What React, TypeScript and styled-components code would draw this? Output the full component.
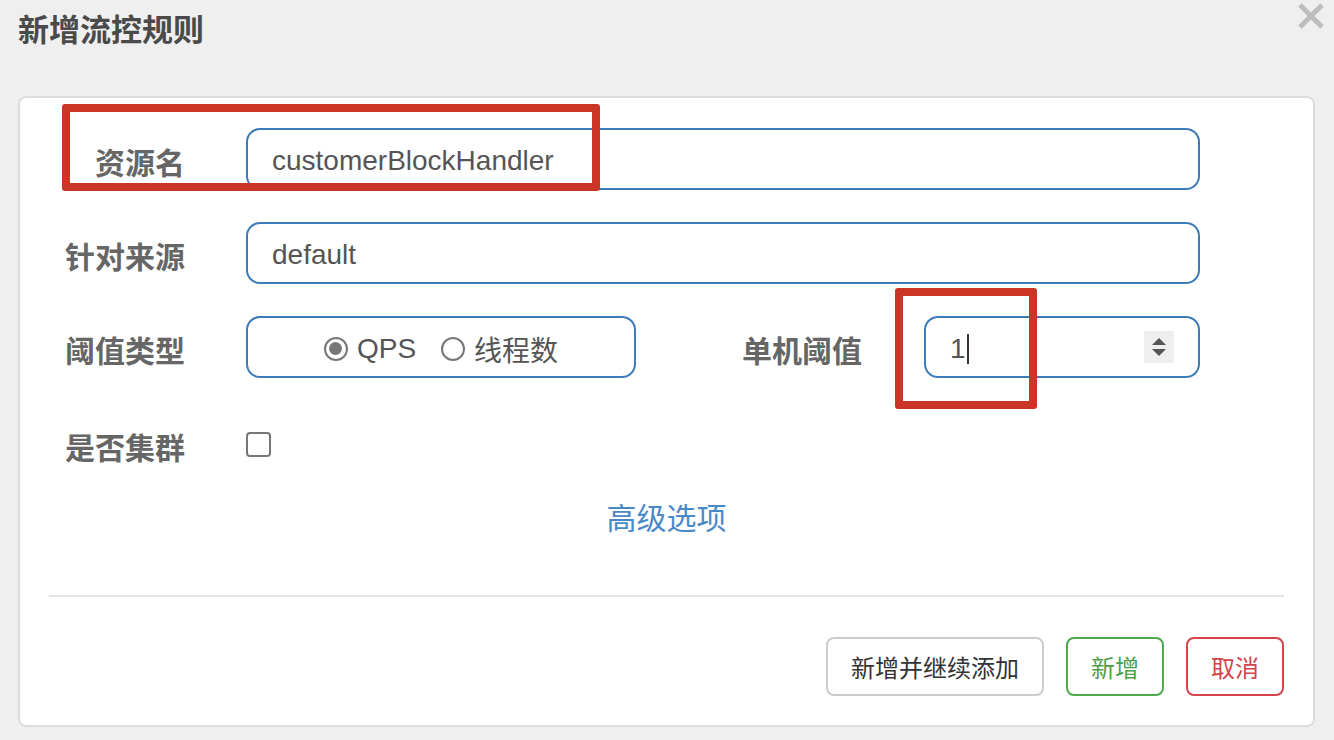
import React from "react";
import styled, { createGlobalStyle } from "styled-components";

const GlobalStyle = createGlobalStyle`
  html, body {
    margin: 0;
    padding: 0;
    background: #efefef;
  }
  body {
    font-family: "Liberation Sans", "Noto Sans CJK SC", sans-serif;
  }
`;

const CJK = `"Liberation Sans", "Noto Sans CJK SC", sans-serif`;

const Page = styled.div`
  width: 1334px;
  height: 740px;
  background: #efefef;
  box-sizing: border-box;
  padding: 0 19px 0 18px;
  display: flex;
  flex-direction: column;
`;

const Header = styled.div`
  height: 96px;
  display: flex;
  justify-content: space-between;
  align-items: flex-start;
  position: relative;
`;

const Title = styled.h4`
  margin: 0;
  padding-top: 13px;
  font-family: ${CJK};
  font-size: 31px;
  line-height: 36px;
  font-weight: 700;
  color: #4a4a4a;
`;

const CloseButton = styled.button`
  margin: 3px -11px 0 0;
  padding: 0;
  width: 30px;
  height: 26px;
  border: none;
  background: transparent;
  display: flex;
  align-items: center;
  justify-content: center;
  cursor: pointer;
`;

const Panel = styled.div`
  position: relative;
  box-sizing: border-box;
  height: 631px;
  background: #fff;
  border: 2px solid #dcdcdc;
  border-radius: 8px;
  padding: 30px 29px 28px 29px;
  display: flex;
  flex-direction: column;
`;

const Form = styled.div`
  display: flex;
  flex-direction: column;
  gap: 32px;
`;

const Row = styled.div<{ $height?: number }>`
  display: grid;
  grid-template-columns: 197px 954px;
  align-items: center;
  height: ${(p) => p.$height ?? 62}px;
`;

const Label = styled.label<{ $pad?: number }>`
  box-sizing: border-box;
  text-align: right;
  padding-top: 3px;
  padding-right: ${(p) => p.$pad ?? 61}px;
  font-family: ${CJK};
  font-size: 30px;
  font-weight: 700;
  color: #666;
  white-space: nowrap;
`;

const Field = styled.div`
  box-sizing: border-box;
  height: 62px;
  border: 2px solid #3f7bb9;
  border-radius: 14px;
  background: #fff;
  display: flex;
  align-items: center;
  padding: 3px 24px 0 24px;
  font-family: ${CJK};
  font-size: 28px;
  color: #555;
`;

const SplitRow = styled.div`
  display: grid;
  grid-template-columns: 390px 1fr 276px;
  align-items: center;
`;

const RadioField = styled(Field)`
  justify-content: center;
  padding: 3px 0 0 0;
  gap: 25px;
`;

const RadioOption = styled.span`
  display: inline-flex;
  align-items: center;
  gap: 9px;
  color: #555;
`;

const RadioCircle = styled.span<{ $checked?: boolean }>`
  box-sizing: border-box;
  width: 24px;
  height: 24px;
  border: 2px solid #777;
  border-radius: 50%;
  display: inline-flex;
  align-items: center;
  justify-content: center;
  &::after {
    content: "";
    display: ${(p) => (p.$checked ? "block" : "none")};
    width: 13px;
    height: 13px;
    border-radius: 50%;
    background: #777;
  }
`;

const NumberField = styled(Field)`
  justify-content: space-between;
  padding: 0 24px;
`;

const NumberValue = styled.span`
  display: inline-flex;
  align-items: center;
  padding-top: 3px;
`;

const Caret = styled.span`
  display: inline-block;
  width: 2px;
  height: 30px;
  margin-left: 1px;
  background: #333;
`;

const Spinner = styled.span`
  width: 30px;
  height: 32px;
  background: #efefef;
  display: flex;
  align-items: center;
  justify-content: center;
`;

const Checkbox = styled.span`
  box-sizing: border-box;
  width: 25px;
  height: 25px;
  border: 2px solid #777;
  border-radius: 4px;
  background: #fff;
  display: block;
`;

const AdvancedLink = styled.a`
  align-self: center;
  margin-top: 23px;
  font-family: ${CJK};
  font-size: 30px;
  line-height: 36px;
  color: #4a89c8;
  text-decoration: none;
  cursor: pointer;
`;

const Divider = styled.hr`
  margin: 58px 0 40px 0;
  border: none;
  height: 2px;
  background: #e5e5e5;
`;

const Footer = styled.div`
  display: flex;
  justify-content: flex-end;
  gap: 22px;
`;

const variants = {
  default: { border: "#cccccc", color: "#333333" },
  success: { border: "#4caa4c", color: "#4a9f4a" },
  danger: { border: "#d4444a", color: "#d4444a" },
};

const Button = styled.button<{ $variant: keyof typeof variants }>`
  box-sizing: border-box;
  height: 59px;
  padding: 0 23px;
  background: #fff;
  border: 2px solid ${(p) => variants[p.$variant].border};
  color: ${(p) => variants[p.$variant].color};
  border-radius: 8px;
  font-family: ${CJK};
  font-size: 24px;
  cursor: pointer;
`;

const Annotation = styled.div<{ $x: number; $y: number; $w: number; $h: number }>`
  position: absolute;
  left: ${(p) => p.$x}px;
  top: ${(p) => p.$y}px;
  width: ${(p) => p.$w}px;
  height: ${(p) => p.$h}px;
  box-sizing: border-box;
  border: 8px solid #cb3526;
  border-radius: 3px;
  pointer-events: none;
`;

export default function App() {
  return (
    <>
      <GlobalStyle />
      <Page>
        <Header>
          <Title>新增流控规则</Title>
          <CloseButton aria-label="关闭">
            <svg width="28" height="26" viewBox="0 0 28 26">
              <path d="M3 2 L25 24 M25 2 L3 24" stroke="#bdbdbd" strokeWidth="5" strokeLinecap="butt" />
            </svg>
          </CloseButton>
        </Header>
        <Panel>
          <Form>
            <Row>
              <Label>资源名</Label>
              <Field>customerBlockHandler</Field>
            </Row>
            <Row>
              <Label>针对来源</Label>
              <Field>default</Field>
            </Row>
            <Row>
              <Label>阈值类型</Label>
              <SplitRow>
                <RadioField>
                  <RadioOption>
                    <RadioCircle $checked />
                    QPS
                  </RadioOption>
                  <RadioOption>
                    <RadioCircle />
                    线程数
                  </RadioOption>
                </RadioField>
                <Label $pad={62}>单机阈值</Label>
                <NumberField>
                  <NumberValue>
                    1<Caret />
                  </NumberValue>
                  <Spinner>
                    <svg width="16" height="20" viewBox="0 0 16 20">
                      <path d="M1 8 L8 1 L15 8 Z" fill="#555" />
                      <path d="M1 12 L15 12 L8 19 Z" fill="#555" />
                    </svg>
                  </Spinner>
                </NumberField>
              </SplitRow>
            </Row>
            <Row $height={68}>
              <Label>是否集群</Label>
              <Checkbox />
            </Row>
          </Form>
          <AdvancedLink>高级选项</AdvancedLink>
          <Divider />
          <Footer>
            <Button $variant="default">新增并继续添加</Button>
            <Button $variant="success">新增</Button>
            <Button $variant="danger">取消</Button>
          </Footer>
          <Annotation $x={42} $y={6} $w={538} $h={87} />
          <Annotation $x={875} $y={190} $w={142} $h={121} />
        </Panel>
      </Page>
    </>
  );
}
